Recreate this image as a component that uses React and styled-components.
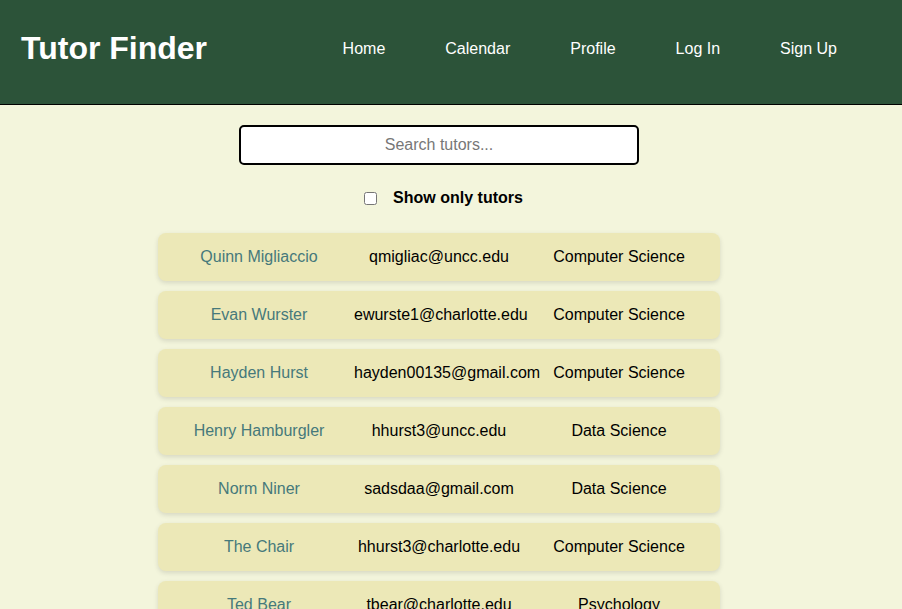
import React from "react";
import styled, { createGlobalStyle } from "styled-components";

const Global = createGlobalStyle`
  html, body { margin: 0; padding: 0; }
  body {
    background: #f3f5dc;
    font-family: "Liberation Sans", Arial, sans-serif;
    color: #000;
  }
`;

const Header = styled.header`
  box-sizing: border-box;
  height: 105px;
  background: #2c5339;
  border-bottom: 1px solid #000;
  display: flex;
  align-items: center;
  padding: 0 65px 7px 21px;
`;

const Title = styled.h1`
  margin: 0;
  font-size: 32px;
  font-weight: bold;
  color: #fff;
  flex: 1;
`;

const Nav = styled.nav`
  display: flex;
  gap: 60px;
  padding-top: 1px;
`;

const NavLink = styled.a`
  color: #fff;
  font-size: 16px;
  text-decoration: none;
`;

const Main = styled.main`
  display: flex;
  flex-direction: column;
  align-items: center;
  padding: 20px 24px 0 0;
`;

const Search = styled.input`
  box-sizing: border-box;
  width: 400px;
  height: 40px;
  border: 2px solid #000;
  border-radius: 5px;
  background: #fff;
  font-family: "Liberation Sans", Arial, sans-serif;
  font-size: 16px;
  text-align: center;
  outline: none;
  &::placeholder { color: #777; }
`;

const FilterRow = styled.label`
  display: flex;
  align-items: center;
  gap: 16px;
  margin-top: 24px;
  font-size: 16px;
  font-weight: bold;
  line-height: 18px;
  padding-left: 9px;
`;

const Check = styled.input`
  margin: 0;
  width: 13px;
  height: 13px;
`;

const List = styled.div`
  display: flex;
  flex-direction: column;
  gap: 10px;
  margin-top: 26px;
`;

const Card = styled.div`
  width: 562px;
  box-sizing: border-box;
  height: 48px;
  background: #ece8b7;
  border-radius: 8px;
  box-shadow: 0 2px 5px rgba(0, 0, 0, 0.12);
  display: grid;
  grid-template-columns: 170px 170px 170px;
  column-gap: 10px;
  justify-content: center;
  align-items: center;
  font-size: 16px;
`;

const Cell = styled.div`
  text-align: center;
  white-space: nowrap;
  color: ${(p) => (p.$name ? "#46797b" : "#000")};
`;

const tutors = [
  ["Quinn Migliaccio", "qmigliac@uncc.edu", "Computer Science"],
  ["Evan Wurster", "ewurste1@charlotte.edu", "Computer Science"],
  ["Hayden Hurst", "hayden00135@gmail.com", "Computer Science"],
  ["Henry Hamburgler", "hhurst3@uncc.edu", "Data Science"],
  ["Norm Niner", "sadsdaa@gmail.com", "Data Science"],
  ["The Chair", "hhurst3@charlotte.edu", "Computer Science"],
  ["Ted Bear", "tbear@charlotte.edu", "Psychology"],
];

export default function App() {
  return (
    <>
      <Global />
      <Header>
        <Title>Tutor Finder</Title>
        <Nav>
          <NavLink href="#">Home</NavLink>
          <NavLink href="#">Calendar</NavLink>
          <NavLink href="#">Profile</NavLink>
          <NavLink href="#">Log In</NavLink>
          <NavLink href="#">Sign Up</NavLink>
        </Nav>
      </Header>
      <Main>
        <Search placeholder="Search tutors..." />
        <FilterRow>
          <Check type="checkbox" />
          Show only tutors
        </FilterRow>
        <List>
          {tutors.map(([n, e, d]) => (
            <Card key={n}>
              <Cell $name>{n}</Cell>
              <Cell>{e}</Cell>
              <Cell>{d}</Cell>
            </Card>
          ))}
        </List>
      </Main>
    </>
  );
}
